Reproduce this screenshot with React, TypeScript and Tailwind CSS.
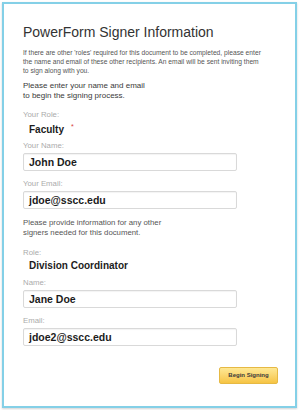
import React from "react";

function Label({ text, className = "" }: { text: string; className?: string }) {
  return <div className={`text-[7.8px] leading-[10px] text-[#ababab] ${className}`}>{text}</div>;
}

function Field({ label, value, className = "" }: { label: string; value: string; className?: string }) {
  return (
    <div className={`flex flex-col ${className}`}>
      <Label text={label} />
      <div className="mt-[2px] flex h-[18px] w-[214px] items-center rounded-[2px] border border-[#d9d9d9] bg-white px-[5px] shadow-[inset_0_1px_1px_rgba(0,0,0,0.05)]">
        <span className="text-[10.5px] font-bold leading-[12px] text-[#1c1c1c]">{value}</span>
      </div>
    </div>
  );
}

export default function App() {
  return (
    <div className="h-[410px] w-[300px] bg-white pl-[2px] pt-[2px] font-['Liberation_Sans',Arial,sans-serif]">
      <div className="flex h-[406px] w-[295px] flex-col border-2 border-[#84d0e7] bg-white pl-[19px] pr-[17px] shadow-[0_1px_2px_rgba(0,0,0,0.18)]">
        <h1 className="mt-[20px] whitespace-nowrap text-[14px] leading-[16px] text-[#333]">
          PowerForm Signer Information
        </h1>
        <p className="mt-[9px] whitespace-nowrap text-[6.7px] leading-[8.8px] text-[#555]">
          If there are other 'roles' required for this document to be completed, please enter
          <br />
          the name and email of these other recipients. An email will be sent inviting them
          <br />
          to sign along with you.
        </p>
        <p className="mt-[6px] whitespace-nowrap text-[8px] leading-[10px] text-[#3a3a3a]">
          Please enter your name and email
          <br />
          to begin the signing process.
        </p>
        <Label text="Your Role:" className="mt-[8.5px]" />
        <div className="mt-[4px] flex items-start pl-[6px]">
          <span className="text-[10px] font-bold leading-[12px] text-[#1c1c1c]">Faculty</span>
          <span className="ml-[7px] mt-[-1px] text-[7px] leading-[7px] text-[#d8403a]">*</span>
        </div>
        <Field label="Your Name:" value="John Doe" className="mt-[4.7px]" />
        <Field label="Your Email:" value="jdoe@sscc.edu" className="mt-[8px]" />
        <p className="mt-[9.5px] whitespace-nowrap text-[7.8px] leading-[10px] text-[#555]">
          Please provide information for any other
          <br />
          signers needed for this document.
        </p>
        <Label text="Role:" className="mt-[10px]" />
        <div className="mt-[2.4px] pl-[6px] text-[10px] font-bold leading-[12px] text-[#1c1c1c]">
          Division Coordinator
        </div>
        <Field label="Name:" value="Jane Doe" className="mt-[5.6px]" />
        <Field label="Email:" value="jdoe2@sscc.edu" className="mt-[8px]" />
        <div className="mt-[21px] flex justify-end">
          <button className="h-[17px] w-[59px] rounded-[2px] border border-[#e6b944] bg-gradient-to-b from-[#fee894] to-[#f6c442] text-[6px] font-bold text-[#3a3a3a]">
            Begin Signing
          </button>
        </div>
      </div>
    </div>
  );
}
